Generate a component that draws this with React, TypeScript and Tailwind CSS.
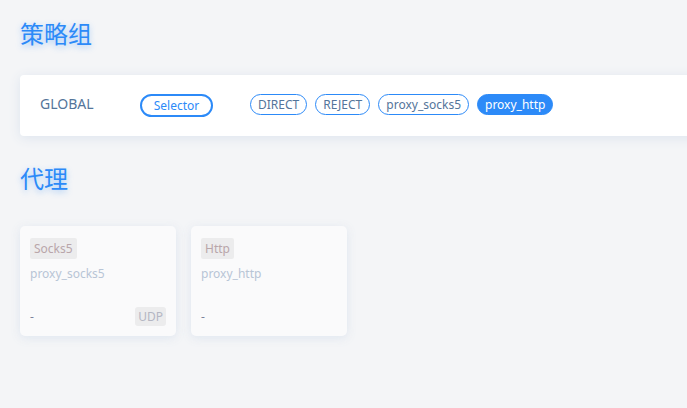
import React from "react";

const font = { fontFamily: '"Noto Sans", "Noto Sans CJK SC", sans-serif' };

function Tag({ label, active }: { label: string; active?: boolean }) {
  return (
    <span
      className={
        "h-[21px] px-[7px] rounded-full border border-[#2c8af8] text-[12px] leading-[19px] flex items-center " +
        (active ? "bg-[#2c8af8] text-white" : "text-[#54759a] bg-white")
      }
    >
      {label}
    </span>
  );
}

function ProxyCard({ type, name, udp }: { type: string; name: string; udp?: boolean }) {
  return (
    <div className="w-[156px] h-[110px] rounded-[5px] bg-[#fafafb] shadow-[0_2px_10px_rgba(221,228,238,0.9)] px-[10px] pt-[12px] pb-[10px] flex flex-col">
      <div className="flex">
        <span className="h-[21px] px-[4px] rounded-[2px] bg-[#ececed] text-[12px] leading-[21px] text-[#b9a6aa]">
          {type}
        </span>
      </div>
      <div className="mt-[5px] text-[12px] leading-[20px] text-[#b8c5d6]">{name}</div>
      <div className="mt-auto flex items-center justify-between h-[19px]">
        <span className="text-[12px] text-[#7d839c]">-</span>
        {udp && (
          <span className="h-[19px] px-[3px] rounded-[3px] bg-[#ececed] text-[12px] leading-[19px] text-[#b4b6c3]">
            UDP
          </span>
        )}
      </div>
    </div>
  );
}

export default function App() {
  return (
    <div className="w-[687px] h-[408px] overflow-hidden bg-[#f4f5f7]" style={font}>
      <div className="pl-[20px] pt-[17px]">
        <h1 className="text-[24px] leading-[34px] text-[#2c8af8] [text-shadow:0_2px_6px_rgba(44,138,248,0.4)]">
          策略组
        </h1>
        <div className="mt-[24px] w-[700px] h-[61px] rounded-[4px] bg-white shadow-[0_2px_12px_rgba(221,228,238,1)] flex items-center">
          <span className="ml-[20px] mb-[4px] w-[100px] text-[14px] text-[#54759a]">GLOBAL</span>
          <span className="w-[73px] h-[23px] rounded-full border-2 border-[#2c8af8] text-[12px] text-[#2c8af8] flex items-center justify-center">
            Selector
          </span>
          <div className="ml-[37px] mb-[2px] flex gap-[8px]">
            <Tag label="DIRECT" />
            <Tag label="REJECT" />
            <Tag label="proxy_socks5" />
            <Tag label="proxy_http" active />
          </div>
        </div>
        <h1 className="mt-[26px] text-[24px] leading-[34px] text-[#2c8af8] [text-shadow:0_2px_6px_rgba(44,138,248,0.4)]">
          代理
        </h1>
        <div className="mt-[30px] flex gap-[15px]">
          <ProxyCard type="Socks5" name="proxy_socks5" udp />
          <ProxyCard type="Http" name="proxy_http" />
        </div>
      </div>
    </div>
  );
}
